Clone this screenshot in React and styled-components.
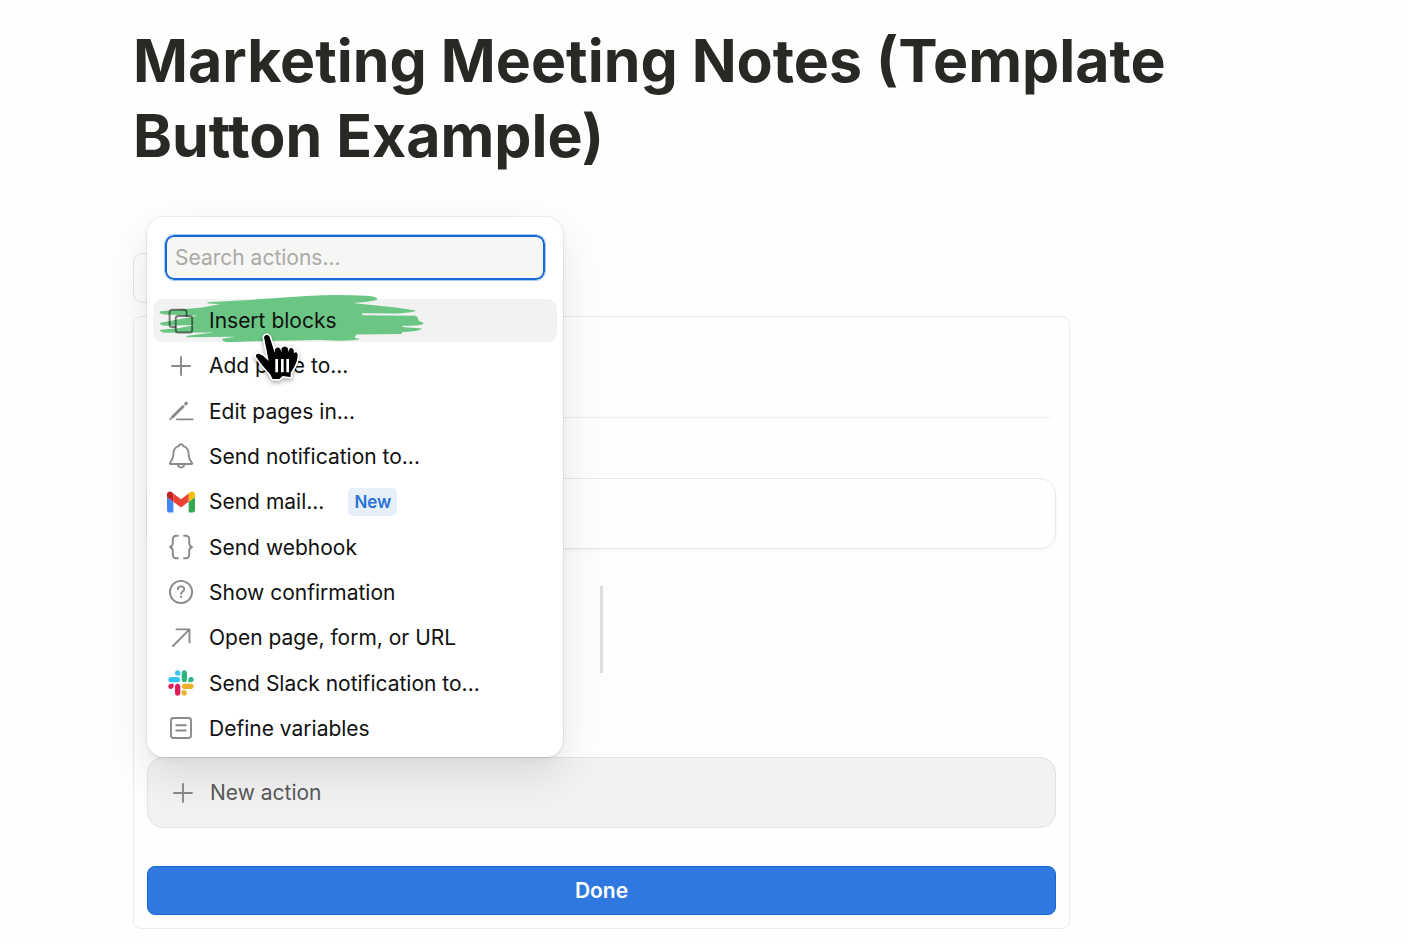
import React from 'react';
import styled, { createGlobalStyle } from 'styled-components';

const GlobalStyle = createGlobalStyle`
  * {
    box-sizing: border-box;
  }

  body {
    margin: 0;
    background: #fefefe;
    color: #111;
    font-family: Inter, 'Liberation Sans', sans-serif;
  }

  button,
  input {
    font-family: inherit;
  }
`;

const Page = styled.main`
  padding: 23px 133px 14px;
`;

const Title = styled.h1`
  margin: 0 0 80px;
  color: #2a2824;
  font-size: 59px;
  line-height: 75px;
  font-weight: 700;
`;

const Editor = styled.section`
  margin-right: 206px;
`;

const TemplateButton = styled.button`
  display: block;
  width: 240px;
  height: 50px;
  margin-bottom: 13px;
  border: 1px solid #e4e4e4;
  border-radius: 10px;
  background: #fefefe;
`;

const Panel = styled.div`
  padding: 0 13px 13px;
  border: 1px solid #ececec;
  border-radius: 8px;
`;

const PanelHeader = styled.div`
  height: 101px;
  margin: 0 6px 60px;
  border-bottom: 1px solid #ececec;
`;

const StepCard = styled.div`
  height: 71px;
  border: 1px solid #e9e9e9;
  border-radius: 16px;
  box-shadow: 0 2px 4px rgba(0, 0, 0, 0.04);
`;

const Connector = styled.div`
  width: 3px;
  height: 87px;
  margin: 37px auto 84px;
  background: #dedede;
`;

const ActionSlot = styled.div`
  position: relative;
  margin-bottom: 38px;
`;

const NewAction = styled.button`
  display: flex;
  align-items: center;
  gap: 13px;
  width: 100%;
  height: 71px;
  padding: 0 21px;
  border: 1px solid #e2e2e2;
  border-radius: 16px;
  background: #f2f2f2;
  color: #5a5a5a;
  font-size: 21px;
`;

const DoneButton = styled.button`
  display: block;
  width: 100%;
  height: 49px;
  border: 1px solid #1567d3;
  border-radius: 8px;
  background: #2f78df;
  color: #fff;
  font-size: 21px;
  font-weight: 600;
`;

const Menu = styled.div`
  position: absolute;
  bottom: 100%;
  left: 0;
  z-index: 1;
  width: 416px;
  padding: 18px 6px 7px;
  border-radius: 17px;
  background: #fff;
  box-shadow: 0 0 0 1px rgba(0, 0, 0, 0.06), 0 3px 6px rgba(0, 0, 0, 0.04),
    0 18px 44px rgba(0, 0, 0, 0.1);
`;

const Search = styled.input`
  display: block;
  width: calc(100% - 24px);
  height: 45px;
  margin: 0 12px 19px;
  padding: 0 8px;
  border: 2px solid #1668d2;
  border-radius: 9px;
  outline: 1px solid #a5cdf5;
  background: #f6f6f4;
  font-size: 21px;

  &::placeholder {
    color: #aaa9a7;
    opacity: 1;
  }
`;

const ActionList = styled.ul`
  display: grid;
  align-content: space-between;
  min-height: 451px;
  margin: 0;
  padding: 0;
  list-style: none;
`;

const ActionItem = styled.li`
  position: relative;
  z-index: ${props => (props.$marked ? 1 : 0)};
`;

const Action = styled.button`
  display: flex;
  align-items: center;
  gap: 14px;
  position: relative;
  width: 100%;
  height: 43px;
  padding: 0 14px;
  border: 0;
  border-radius: 9px;
  background: ${props => (props.$active ? '#f2f2f2' : 'transparent')};
  color: #111;
  font-size: 21px;
  text-align: left;
`;

const Label = styled.span`
  position: relative;
`;

const Badge = styled.span`
  margin-left: 10px;
  padding: 0 6px;
  border-radius: 5px;
  background: #e6f0fb;
  color: #2a72d4;
  font-size: 17px;
  line-height: 28px;
  font-weight: 600;
`;

const Icon = styled.svg`
  position: relative;
  flex: none;
  width: 28px;
  height: 28px;
  fill: none;
  stroke: ${props => (props.$dark ? 'rgba(0, 0, 0, 0.5)' : '#8a8a8a')};
  stroke-width: 1.9;
  stroke-linecap: round;
  stroke-linejoin: round;
`;

const Logo = styled(Icon)`
  stroke: none;
`;

const MarkerSvg = styled.svg`
  position: absolute;
  top: -5px;
  left: 6px;
  width: 266px;
  height: 49px;
  fill: #6bc683;
`;

const CursorSvg = styled.svg`
  position: absolute;
  top: 30px;
  left: 98px;
  width: 56px;
  height: 60px;
  pointer-events: none;
  filter: drop-shadow(0 2px 2px rgba(0, 0, 0, 0.35));
`;

const PlusIcon = () => (
  <Icon viewBox="0 0 28 28">
    <path d="M14 5v18M5 14h18" />
  </Icon>
);

const BlocksIcon = () => (
  <Icon viewBox="0 0 28 28" $dark>
    <rect x="8.7" y="9" width="16.5" height="16.5" rx="2.6" />
    <path d="M8.7 20H5.2a2.6 2.6 0 0 1-2.6-2.6V5.3a2.6 2.6 0 0 1 2.6-2.6H17a2.6 2.6 0 0 1 2.6 2.6V9" />
  </Icon>
);

const PencilIcon = () => (
  <Icon viewBox="0 0 28 28">
    <path d="M10 22.4h15.5" />
    <path d="M5 20.5 16.8 8.7" strokeWidth="3" strokeLinecap="butt" />
    <path d="m3 22.4 2-2" strokeWidth="1.6" />
    <path d="m18.6 6.9.8-.8" strokeWidth="3" />
  </Icon>
);

const BellIcon = () => (
  <Icon viewBox="0 0 28 28">
    <path d="M3.5 22c-.7 0-.9-.7-.5-1.2 2-2.2 3.2-4.2 3.4-9.3.2-4 2.3-6.8 5.5-7.4.3-2.5 3.9-2.5 4.2 0 3.2.6 5.3 3.4 5.5 7.4.2 5.1 1.4 7.1 3.4 9.3.4.5.2 1.2-.5 1.2z" />
    <path d="M10.8 22.5c.5 4 5.9 4 6.4 0" />
  </Icon>
);

const GmailIcon = () => (
  <Logo viewBox="52 41 88 68">
    <path fill="#4285f4" d="M58 108h14V74L52 59v43c0 3.32 2.69 6 6 6" />
    <path fill="#34a853" d="M120 108h14c3.32 0 6-2.69 6-6V59l-20 15" />
    <path fill="#fbbc04" d="M120 48v26l20-15v-8c0-7.42-8.47-11.65-14.4-7.2" />
    <path fill="#ea4335" d="M72 74V48l24 18 24-18v26L96 92" />
    <path fill="#c5221f" d="M52 51v8l20 15V48l-5.6-4.2c-5.94-4.45-14.4-.22-14.4 7.2" />
  </Logo>
);

const BracesIcon = () => (
  <Icon viewBox="0 0 28 28">
    <path d="M11 2.8H9A3.2 3.2 0 0 0 5.8 6v4.3c0 1.7-.8 2.9-2.8 3.7 2 .8 2.8 2 2.8 3.7V22A3.2 3.2 0 0 0 9 25.2h2M17 2.8h2A3.2 3.2 0 0 1 22.2 6v4.3c0 1.7.8 2.9 2.8 3.7-2 .8-2.8 2-2.8 3.7V22a3.2 3.2 0 0 1-3.2 3.2h-2" />
  </Icon>
);

const QuestionIcon = () => (
  <Icon viewBox="0 0 28 28">
    <circle cx="14" cy="14" r="11.1" />
    <path d="M10.8 11.2c0-3.8 6.5-3.8 6.5 0 0 2.4-3.2 2.3-3.2 4.7" />
    <path d="M14.1 19v.1" strokeWidth="2.3" />
  </Icon>
);

const ArrowIcon = () => (
  <Icon viewBox="0 0 28 28">
    <path d="M9.5 5.4h13v13M22.2 5.7 6 22" />
  </Icon>
);

const SlackIcon = () => (
  <Logo viewBox="-6 -6 135 135">
    <path fill="#e01e5a" d="M25.8 77.6c0 7.1-5.8 12.9-12.9 12.9S0 84.7 0 77.6s5.8-12.9 12.9-12.9h12.9zM32.3 77.6c0-7.1 5.8-12.9 12.9-12.9s12.9 5.8 12.9 12.9v32.3c0 7.1-5.8 12.9-12.9 12.9s-12.9-5.8-12.9-12.9z" />
    <path fill="#36c5f0" d="M45.2 25.8c-7.1 0-12.9-5.8-12.9-12.9S38.1 0 45.2 0s12.9 5.8 12.9 12.9v12.9zM45.2 32.3c7.1 0 12.9 5.8 12.9 12.9s-5.8 12.9-12.9 12.9H12.9C5.8 58.1 0 52.3 0 45.2s5.8-12.9 12.9-12.9z" />
    <path fill="#2eb67d" d="M97 45.2c0-7.1 5.8-12.9 12.9-12.9s12.9 5.8 12.9 12.9-5.8 12.9-12.9 12.9H97zM90.5 45.2c0 7.1-5.8 12.9-12.9 12.9s-12.9-5.8-12.9-12.9V12.9C64.7 5.8 70.5 0 77.6 0s12.9 5.8 12.9 12.9z" />
    <path fill="#ecb22e" d="M77.6 97c7.1 0 12.9 5.8 12.9 12.9s-5.8 12.9-12.9 12.9-12.9-5.8-12.9-12.9V97zM77.6 90.5c-7.1 0-12.9-5.8-12.9-12.9s5.8-12.9 12.9-12.9h32.3c7.1 0 12.9 5.8 12.9 12.9s-5.8 12.9-12.9 12.9z" />
  </Logo>
);

const VariablesIcon = () => (
  <Icon viewBox="0 0 28 28">
    <rect x="4" y="4" width="20" height="20" rx="2.5" />
    <path d="M9.2 11.3h9.6M9.2 16.5h9.6" />
  </Icon>
);

const Marker = () => (
  <MarkerSvg viewBox="117 281 798 148" aria-hidden="true">
    <path d="M260 306 400 298 560 287Q640 281 740 286 775 288 774 297 768 304 700 308L735 312 830 322 890 331Q888 337 830 340L728 339V345L888 347Q898 350 897 360L914 369Q912 377 850 377V381L908 385Q906 393 850 396L846 402 710 403 705 413 722 418Q690 425 600 420L400 424 320 427Q304 424 306 416L345 410 200 412Q192 409 205 406L280 397 130 398Q112 394 120 389L175 384 225 375 130 377Q112 373 119 368L170 358 232 347 130 343Q110 339 118 333L160 329 245 322 300 311 262 310Z" />
  </MarkerSvg>
);

const HandCursor = () => (
  <CursorSvg viewBox="393 387 168 180" aria-hidden="true">
    <path
      d="M432 411Q440 398 449 411L464 458 465 448Q473 438 481 447L484 456 485 445Q494 434 503 444L506 456 508 447Q516 440 521 450L522 460Q530 452 533 463 533 486 519 507L512 518V531L488 528 478 537H458L450 522 428 497 408 470Q406 460 417 461L430 468 446 483Z"
      fill="#000"
      stroke="#fff"
      strokeWidth="10"
      strokeLinejoin="round"
      paintOrder="stroke"
    />
    <path d="M470 477v40M487 477v40M503 477v40" stroke="#fff" strokeWidth="8" />
  </CursorSvg>
);

const actions = [
  { label: 'Insert blocks', icon: BlocksIcon, active: true },
  { label: 'Add page to...', icon: PlusIcon },
  { label: 'Edit pages in...', icon: PencilIcon },
  { label: 'Send notification to...', icon: BellIcon },
  { label: 'Send mail...', icon: GmailIcon, badge: 'New' },
  { label: 'Send webhook', icon: BracesIcon },
  { label: 'Show confirmation', icon: QuestionIcon },
  { label: 'Open page, form, or URL', icon: ArrowIcon },
  { label: 'Send Slack notification to...', icon: SlackIcon },
  { label: 'Define variables', icon: VariablesIcon }
];

const ActionMenu = () => (
  <Menu>
    <Search type="text" placeholder="Search actions..." aria-label="Search actions" />
    <ActionList>
      {actions.map(({ label, icon: ActionIcon, active, badge }) => (
        <ActionItem key={label} $marked={active}>
          <Action type="button" $active={active}>
            {active && <Marker />}
            <ActionIcon />
            <Label>{label}</Label>
            {badge && <Badge>{badge}</Badge>}
          </Action>
          {active && <HandCursor />}
        </ActionItem>
      ))}
    </ActionList>
  </Menu>
);

const App = () => (
  <>
    <GlobalStyle />
    <Page>
      <Title>Marketing Meeting Notes (Template Button Example)</Title>
      <Editor>
        <TemplateButton type="button" aria-label="Template button" />
        <Panel>
          <PanelHeader />
          <StepCard />
          <Connector />
          <ActionSlot>
            <NewAction type="button">
              <PlusIcon />
              New action
            </NewAction>
            <ActionMenu />
          </ActionSlot>
          <DoneButton type="button">Done</DoneButton>
        </Panel>
      </Editor>
    </Page>
  </>
);

export default App;
